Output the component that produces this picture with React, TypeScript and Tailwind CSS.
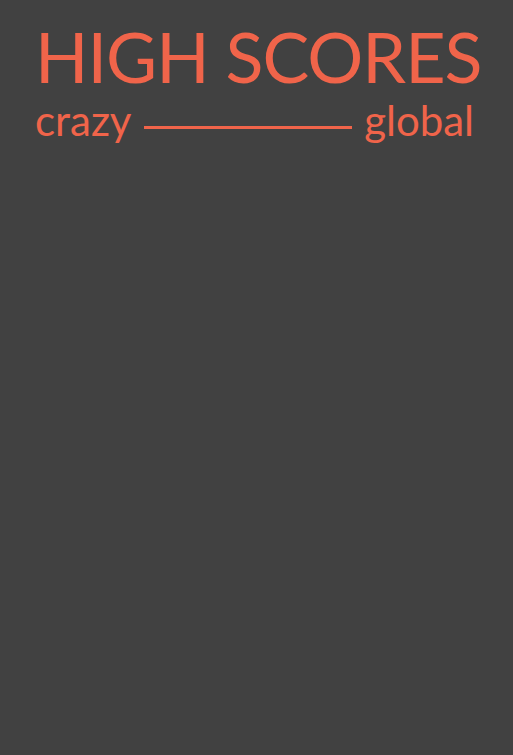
import React from "react";

export default function App() {
  return (
    <div className="w-[513px] h-[755px] bg-[#414141] overflow-hidden" style={{ fontFamily: "Lato, 'Open Sans', sans-serif" }}>
      <div className="pl-[35px] pr-[39px] pt-[20px]">
        <h1 className="text-[#f0644a] text-[70px] leading-[72px] font-normal tracking-[-1px] whitespace-nowrap">HIGH SCORES</h1>
        <div className="flex items-center gap-[12px] mt-[4px] text-[#f0644a] text-[42px] leading-[48px]">
          <span>crazy</span>
          <div className="flex-1 h-[3px] bg-[#f0644a] translate-y-[7px]" />
          <span>global</span>
        </div>
      </div>
    </div>
  );
}
